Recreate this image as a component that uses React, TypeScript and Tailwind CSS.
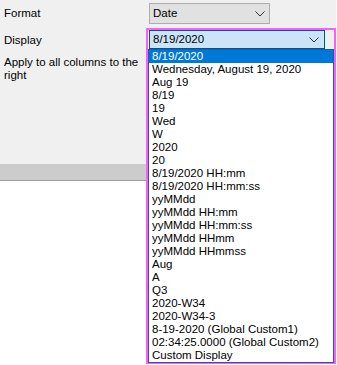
import React from "react";

const options = [
  "8/19/2020",
  "Wednesday, August 19, 2020",
  "Aug 19",
  "8/19",
  "19",
  "Wed",
  "W",
  "2020",
  "20",
  "8/19/2020 HH:mm",
  "8/19/2020 HH:mm:ss",
  "yyMMdd",
  "yyMMdd HH:mm",
  "yyMMdd HH:mm:ss",
  "yyMMdd HHmm",
  "yyMMdd HHmmss",
  "Aug",
  "A",
  "Q3",
  "2020-W34",
  "2020-W34-3",
  "8-19-2020 (Global Custom1)",
  "02:34:25.0000 (Global Custom2)",
  "Custom Display",
];

const Chevron = () => (
  <svg width="10" height="6" viewBox="0 0 10 6" fill="none">
    <path d="M0.5 0.5 L5 5 L9.5 0.5" stroke="#333" strokeWidth="1" />
  </svg>
);

const App = () => {
  return (
    <div className="relative w-[337px] h-[365px] bg-white overflow-hidden font-['Liberation_Sans',Arial,sans-serif] text-[11.5px] text-black">
      <div className="w-[336px] h-[164px] bg-[#f0f0f0] flex flex-col">
        <div className="h-[27px] flex items-center">
          <div className="w-[149px] pl-1">Format</div>
          <div className="w-[121px] h-[21px] bg-[#e1e1e1] border border-[#adadad] flex items-center justify-between pl-[3px] pr-[4px]">
            <span>Date</span>
            <Chevron />
          </div>
        </div>
        <div className="h-[27px] flex items-center pl-1">Display</div>
        <div className="w-[145px] pl-1 pt-[2px] leading-[13px]">
          Apply to all columns to the right
        </div>
      </div>
      <div className="w-[336px] h-[17px] bg-[#cccccc] border-b border-[#a0a0a0]" />

      <div className="absolute left-[146px] top-[28px] w-[190px] h-[336px] border-2 border-[#ff5cff] bg-[#f0f0f0] flex flex-col">
        <div className="ml-[1px] w-[176px] h-[20px] bg-[#cce4f7] border border-[#005499] flex items-center justify-between pl-[3px] pr-[5px]">
          <span>8/19/2020</span>
          <Chevron />
        </div>
        <div className="flex-1 bg-white border border-[#1c5fa8] leading-[13px]">
          {options.map((o, i) => (
            <div
              key={o}
              className={
                "h-[13px] pl-[3px] whitespace-nowrap " +
                (i === 0 ? "bg-[#0078d7] text-white" : "")
              }
            >
              {o}
            </div>
          ))}
        </div>
      </div>
    </div>
  );
};

export default App;
